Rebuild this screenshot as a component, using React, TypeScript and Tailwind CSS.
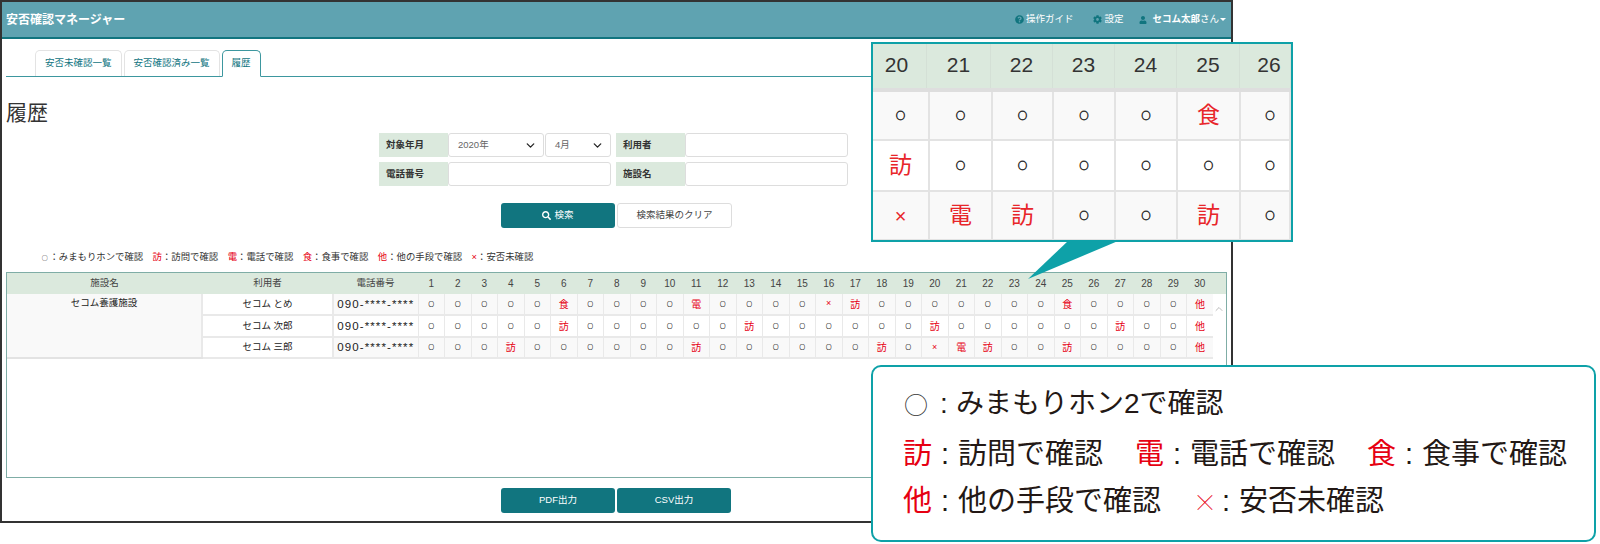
import { ChevronDown, ChevronUp } from "lucide-react";
import { FaCog, FaQuestionCircle, FaSearch, FaUser } from "react-icons/fa";

const days = Array.from({ length: 30 }, (_, i) => i + 1);

const rows = [
  { name: "セコム とめ", marks: { 6: "食", 11: "電", 16: "×", 17: "訪", 25: "食", 30: "他" } as Record<number, string> },
  { name: "セコム 次郎", marks: { 6: "訪", 13: "訪", 20: "訪", 27: "訪", 30: "他" } as Record<number, string> },
  { name: "セコム 三郎", marks: { 4: "訪", 11: "訪", 18: "訪", 20: "×", 21: "電", 22: "訪", 25: "訪", 30: "他" } as Record<number, string> },
];

const zoomDays = [20, 21, 22, 23, 24, 25, 26];
const zoomHeadWidths = ["w-[54px] pr-[6px]", "w-[64px]", "w-[62px]", "w-[62px]", "w-[62px]", "w-[63px]", "flex-1 pl-[8px]"];
const zoomCellWidths = ["w-[57px]", "w-[63px]", "w-[61px]", "w-[62px]", "w-[62px]", "w-[63px]", "flex-1 pl-[10px]"];

const zoomRows = [
  ["○", "○", "○", "○", "○", "食", "○"],
  ["訪", "○", "○", "○", "○", "○", "○"],
  ["×", "電", "訪", "○", "○", "訪", "○"],
];

const legend = [
  { mark: "訪", text: "訪問で確認" },
  { mark: "電", text: "電話で確認" },
  { mark: "食", text: "食事で確認" },
  { mark: "他", text: "他の手段で確認" },
  { mark: "×", text: "安否未確認" },
];

const wideColon = "\uFF1A";

function Tab({ label, active }: { label: string; active?: boolean }) {
  return (
    <div
      className={
        active
          ? "h-[27px] -mb-px px-[9px] flex items-center rounded-t-[5px] border border-[#3d979f] border-b-white bg-white text-[9.5px] text-[#11757f]"
          : "h-[26px] px-[9px] flex items-center rounded-t-[5px] border border-b-0 border-[#e3e3e3] bg-white text-[9.5px] text-[#11757f]"
      }
    >
      {label}
    </div>
  );
}

function FieldLabel({ label }: { label: string }) {
  return (
    <div className="w-[69px] h-full pl-[7px] flex items-center bg-[#dbe9dd] text-[9.5px] font-bold text-[#333]">
      {label}
    </div>
  );
}

function SelectBox({ value, className }: { value: string; className: string }) {
  return (
    <div className={`h-full pl-[9px] pr-[6px] flex items-center justify-between rounded-[3px] border border-[#ddd] bg-white text-[9.5px] text-[#666] ${className}`}>
      {value}
      <ChevronDown size={13} strokeWidth={2.4} className="text-[#222]" />
    </div>
  );
}

function Button({ label, icon }: { label: string; icon?: boolean }) {
  return (
    <div className="w-[114px] h-[25px] flex items-center justify-center gap-[3px] rounded-[3px] bg-[#11757f] text-[9.5px] text-white">
      {icon && <FaSearch size={9} />}
      {label}
    </div>
  );
}

function HistoryTable() {
  return (
    <table className="w-[1219px] table-fixed border-collapse">
      <colgroup>
        <col className="w-[195px]" />
        <col className="w-[131px]" />
        <col className="w-[85px]" />
        {days.map((d) => (
          <col key={d} className="w-[26.5px]" />
        ))}
        <col className="w-[13px]" />
      </colgroup>
      <thead>
        <tr className="h-[21px] bg-[#dbe9dd] text-[9.5px] text-[#444]">
          <th className="font-normal">施設名</th>
          <th className="font-normal">利用者</th>
          <th className="font-normal">電話番号</th>
          {days.map((d) => (
            <th key={d} className="font-normal text-[10px]">
              {d}
            </th>
          ))}
          <th />
        </tr>
      </thead>
      <tbody>
        {rows.map((row, i) => (
          <tr key={row.name} className={i === 1 ? "h-[22px] bg-white" : "h-[21px] bg-[#f9f9f9]"}>
            {i === 0 && (
              <td rowSpan={3} className="pt-[2px] align-top text-center text-[9.5px] text-[#222] bg-[#f9f9f9] border-b-2 border-[#e3e3e3]">
                セコム養護施設
              </td>
            )}
            <td className="text-center text-[9.5px] text-[#222] border-l-2 border-b-2 border-[#e9e9e9] bg-white">{row.name}</td>
            <td className="pt-px text-center text-[11.5px] tracking-[1.1px] text-[#222] border-l-2 border-b-2 border-[#e9e9e9] whitespace-nowrap">
              090-****-****
            </td>
            {days.map((d) => (
              <td
                key={d}
                className={
                  row.marks[d]
                    ? `text-center text-[#e60012] border-l border-b-2 border-[#e9e9e9] ${row.marks[d] === "×" ? "text-[9px]" : "text-[10px]"}`
                    : "text-center text-[5.5px] font-['Noto_Sans_CJK_JP'] text-[#333] [-webkit-text-stroke:0.2px_#333] border-l border-b-2 border-[#e9e9e9]"
                }
              >
                {row.marks[d] ?? "○"}
              </td>
            ))}
            {i === 0 && (
              <td rowSpan={3} className="align-top bg-white">
                <ChevronUp size={12} className="mt-[9px] text-[#bbb]" />
              </td>
            )}
          </tr>
        ))}
      </tbody>
    </table>
  );
}

function ZoomCallout() {
  return (
    <div className="absolute left-[871px] top-[42px] w-[422px] h-[200px] border-2 border-[#0ea1a8] bg-white overflow-hidden">
      <div className="flex h-[44px] bg-[#dbe9dd] border-b-[4px] border-[#dedede] box-content">
        {zoomDays.map((d, i) => (
          <div
            key={d}
            className={`${zoomHeadWidths[i]} shrink-0 pb-[3px] flex items-center justify-center border-r border-[#d4e0d6] text-[21px] text-[#333]`}
          >
            {d}
          </div>
        ))}
      </div>
      {zoomRows.map((cells, r) => (
        <div key={r} className={`flex border-b-2 border-[#e3e3e3] ${r === 1 ? "h-[51px] bg-white" : "h-[49px] bg-[#f9f9f9]"}`}>
          {cells.map((c, i) => (
            <div
              key={i}
              className={`${zoomCellWidths[i]} shrink-0 flex items-center justify-center border-r-2 border-[#e3e3e3] ${
                c === "○"
                  ? "text-[9px] font-['Noto_Sans_CJK_JP'] text-[#333] [-webkit-text-stroke:0.8px_#333]"
                  : c === "×"
                    ? "text-[20px] text-[#e8262a]"
                    : "text-[23px] text-[#e8262a]"
              }`}
            >
              {c}
            </div>
          ))}
        </div>
      ))}
    </div>
  );
}

function LegendItem({ mark, text }: { mark: string; text: string }) {
  return (
    <span className="flex items-center shrink-0 whitespace-nowrap">
      {mark === "×" ? (
        <span className="w-[20px] text-center text-[24px] font-['Noto_Sans_CJK_JP'] font-thin leading-none text-[#e60012]">×</span>
      ) : (
        <span className="w-[29px] text-[#e60012]">{mark}</span>
      )}
      <span className="w-[26px] text-center">:</span>
      {text}
    </span>
  );
}

function LegendCallout() {
  return (
    <div className="absolute left-[871px] top-[365px] w-[725px] h-[177px] pl-[30px] pt-[18px] rounded-[10px] border-2 border-[#0ea1a8] bg-white text-[29px] leading-[38px] text-[#231815]">
      <div className="flex items-center h-[38px] text-[28px] whitespace-nowrap">
        <span className="w-[29px] pl-[1px] text-[24px] font-['Noto_Sans_CJK_JP'] font-light text-[#333]">○</span>
        <span className="w-[24px] text-center">:</span>
        <span>みまもりホン2で確認</span>
      </div>
      <div className="mt-[12px] flex gap-[32px] h-[38px]">
        {legend.slice(0, 3).map((l) => (
          <LegendItem key={l.mark} mark={l.mark} text={l.text} />
        ))}
      </div>
      <div className="mt-[9px] flex gap-[32px] h-[38px]">
        {legend.slice(3).map((l) => (
          <LegendItem key={l.mark} mark={l.mark} text={l.text} />
        ))}
      </div>
    </div>
  );
}

export default function App() {
  return (
    <div className="relative w-[1600px] h-[544px] bg-white overflow-hidden font-['Liberation_Sans','Noto_Sans_CJK_JP',sans-serif]">
      <div className="w-[1233px] h-[523px] flex flex-col border-2 border-[#333] bg-white">
        {/* header */}
        <div className="h-[37px] shrink-0 flex items-center justify-between pl-[4px] pr-[5px] bg-[#5fa3b1] border-b-2 border-[#11757f] text-white">
          <span className="text-[12px] font-bold">安否確認マネージャー</span>
          <div className="flex items-center text-[9.5px]">
            <FaQuestionCircle size={9} className="mr-[2px] text-[#11757f]" />
            <span>操作ガイド</span>
            <FaCog size={9} className="ml-[20px] mr-[2px] text-[#11757f]" />
            <span>設定</span>
            <FaUser size={8} className="ml-[16px] mr-[5px] text-[#11757f]" />
            <span className="font-bold">セコム太郎</span>
            <span>さん</span>
            <span className="ml-[1px] border-x-[3px] border-t-[3px] border-x-transparent border-t-white" />
          </div>
        </div>

        {/* tabs */}
        <div className="mt-[11px] ml-[4px] mr-[6px] pl-[29px] flex items-end gap-[2px] border-b border-[#3d979f]">
          <Tab label="安否未確認一覧" />
          <Tab label="安否確認済み一覧" />
          <Tab label="履歴" active />
        </div>

        <h1 className="mt-[24px] ml-[4px] text-[21px] leading-[24px] font-normal text-[#333]">履歴</h1>

        {/* search form */}
        <div className="mt-[8px] ml-[377px] flex flex-col gap-[5px]">
          <div className="h-[24px] flex">
            <FieldLabel label="対象年月" />
            <SelectBox value="2020年" className="w-[96px]" />
            <SelectBox value="4月" className="ml-px w-[66px]" />
            <div className="w-[5px]" />
            <FieldLabel label="利用者" />
            <div className="w-[163px] rounded-[3px] border border-[#ddd]" />
          </div>
          <div className="h-[24px] flex">
            <FieldLabel label="電話番号" />
            <div className="w-[163px] rounded-[3px] border border-[#ddd]" />
            <div className="w-[5px]" />
            <FieldLabel label="施設名" />
            <div className="w-[163px] rounded-[3px] border border-[#ddd]" />
          </div>
        </div>

        <div className="mt-[17px] ml-[499px] flex gap-[2px]">
          <Button label="検索" icon />
          <div className="w-[115px] h-[25px] flex items-center justify-center rounded-[3px] border border-[#ddd] text-[9.5px] text-[#444]">
            検索結果のクリア
          </div>
        </div>

        {/* legend */}
        <div className="mt-[22px] ml-[38px] flex items-center h-[14px] text-[9.4px] text-[#333] whitespace-pre">
          <span className="w-[9.4px] text-center text-[6px] font-['Noto_Sans_CJK_JP'] font-bold">○</span>
          <span>
            {wideColon}みまもりホンで確認
          </span>
          {legend.map((l) => (
            <span key={l.mark} className="ml-[9.4px]">
              <span className="text-[#e60012]">{l.mark}</span>
              {wideColon}
              {l.text}
            </span>
          ))}
        </div>

        {/* table */}
        <div className="mt-[8px] ml-[4px] w-[1221px] h-[206px] shrink-0 border border-[#7fada6]">
          <HistoryTable />
        </div>

        <div className="mt-[10px] ml-[499px] flex gap-[2px]">
          <Button label="PDF出力" />
          <Button label="CSV出力" />
        </div>
      </div>

      <ZoomCallout />
      <svg className="absolute left-[1020px] top-[241px]" width="100" height="40" viewBox="0 0 100 40">
        <polygon points="48,0 98,0 8,38" fill="#0ea1a8" />
      </svg>
      <LegendCallout />
    </div>
  );
}
